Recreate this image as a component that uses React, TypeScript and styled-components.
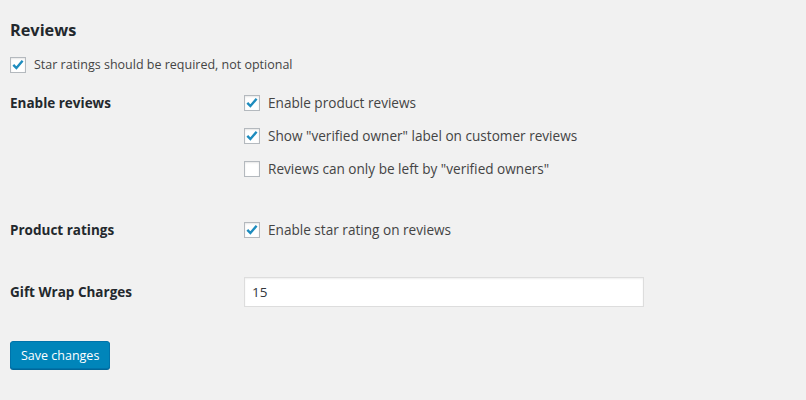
import React from "react";
import styled, { createGlobalStyle } from "styled-components";

const GlobalStyle = createGlobalStyle`
  html, body { margin: 0; padding: 0; background: #f1f1f1; }
  body { font-family: "Open Sans", "Noto Sans", sans-serif; font-size: 12.5px; color: #444; }
  * { box-sizing: border-box; }
`;

const Page = styled.div`
  padding: 0 10px;
  width: 806px;
  height: 400px;
  background: #f1f1f1;
`;

const Title = styled.h2`
  margin: 19px 0 0;
  font-size: 16.3px;
  line-height: 23px;
  font-weight: 700;
  color: #23282d;
`;

const Option = styled.label<{ $top?: number; $size?: number }>`
  display: flex;
  align-items: center;
  gap: 8px;
  height: 20px;
  margin-top: ${(p) => p.$top ?? 0}px;
  color: #444;
  font-size: ${(p) => p.$size ?? 12.5}px;
  line-height: 20px;
  cursor: pointer;
`;

const Box = styled.span`
  flex: none;
  width: 16px;
  height: 16px;
  border: 1px solid #b4b9be;
  background: #fff;
  box-shadow: inset 0 1px 2px rgba(0, 0, 0, 0.1);
  display: flex;
  align-items: center;
  justify-content: center;
`;

const FormTable = styled.div`
  display: flex;
  flex-direction: column;
`;

const Row = styled.div<{ $top: number }>`
  display: grid;
  grid-template-columns: 234px 400px;
  margin-top: ${(p) => p.$top}px;
  align-items: start;
`;

const Th = styled.div<{ $h?: number }>`
  font-weight: 700;
  color: #23282d;
  font-size: 13.5px;
  line-height: ${(p) => p.$h ?? 20}px;
`;

const Fieldset = styled.div`
  display: flex;
  flex-direction: column;
  gap: 13px;
`;

const TextInput = styled.input`
  width: 400px;
  height: 30px;
  border: 1px solid #ddd;
  box-shadow: inset 0 1px 2px rgba(0, 0, 0, 0.07);
  background: #fff;
  padding: 0 7px;
  font-family: "Open Sans", "Noto Sans", sans-serif;
  font-size: 13.5px;
  color: #32373c;
  outline: none;
`;

const Button = styled.button`
  margin-top: 34px;
  height: 28px;
  padding: 0 10px;
  border: 1px solid #0073aa;
  border-radius: 3px;
  background: #0085ba;
  color: #fff;
  font-family: "Open Sans", "Noto Sans", sans-serif;
  font-size: 12.5px;
  box-shadow: 0 1px 0 #006799;
  cursor: pointer;
`;

const Check = () => (
  <svg width="14" height="14" viewBox="0 0 14 14">
    <path d="M2.3 6.8 L5.4 10 L11.6 2.8" fill="none" stroke="#1e8cbe" strokeWidth="2.4" strokeLinecap="butt" strokeLinejoin="miter" />
  </svg>
);

const CheckOption = ({ checked, label, top, size }: { checked: boolean; label: string; top?: number; size?: number }) => (
  <Option $top={top} $size={size}>
    <Box>{checked && <Check />}</Box>
    <span>{label}</span>
  </Option>
);

export default function App() {
  return (
    <Page>
      <GlobalStyle />
      <Title>Reviews</Title>
      <CheckOption top={13} checked label="Star ratings should be required, not optional" />
      <FormTable>
        <Row $top={18}>
          <Th>Enable reviews</Th>
          <Fieldset>
            <CheckOption size={13.6} checked label="Enable product reviews" />
            <CheckOption size={13.6} checked label={'Show "verified owner" label on customer reviews'} />
            <CheckOption size={13.6} checked={false} label={'Reviews can only be left by "verified owners"'} />
          </Fieldset>
        </Row>
        <Row $top={41}>
          <Th>Product ratings</Th>
          <CheckOption size={13.6} checked label="Enable star rating on reviews" />
        </Row>
        <Row $top={37}>
          <Th $h={30}>Gift Wrap Charges</Th>
          <TextInput defaultValue="15" />
        </Row>
      </FormTable>
      <Button>Save changes</Button>
    </Page>
  );
}
